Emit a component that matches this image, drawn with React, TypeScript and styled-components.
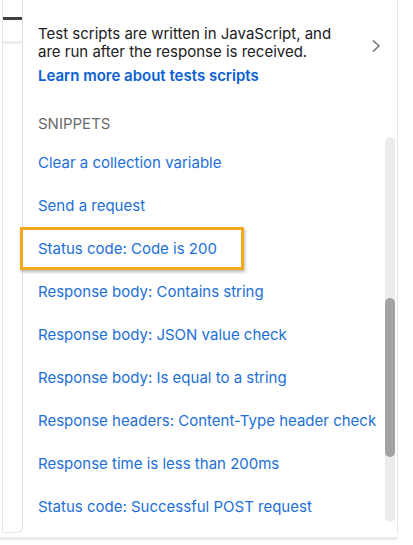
import React from "react";
import styled, { createGlobalStyle } from "styled-components";

const GlobalStyle = createGlobalStyle`
    html, body {
        margin: 0;
        padding: 0;
        background: #ffffff;
    }
    body {
        font-family: Inter, "Noto Sans", sans-serif;
        -webkit-font-smoothing: antialiased;
    }
`;

const snippets = [
    "Clear a collection variable",
    "Send a request",
    "Status code: Code is 200",
    "Response body: Contains string",
    "Response body: JSON value check",
    "Response body: Is equal to a string",
    "Response headers: Content-Type header check",
    "Response time is less than 200ms",
    "Status code: Successful POST request",
];

namespace Styled {
    export const Page = styled.div`
        width: 413px;
        height: 545px;
        display: flex;
        flex-direction: column;
        overflow: hidden;
    `;

    export const Row = styled.div`
        display: flex;
        height: 534px;
        width: 398px;
    `;

    export const LeftColumn = styled.div`
        width: 21px;
        margin-left: 2px;
        height: 533px;
        border-left: 1px solid #e4e4e4;
        border-right: 1px solid #e0e0e0;
        border-bottom: 1px solid #e8e8e8;
        border-bottom-right-radius: 6px;
        box-sizing: border-box;
        padding-top: 17px;
    `;

    export const Tab = styled.div`
        height: 27px;
        box-sizing: border-box;
        border-top: 3px solid #404040;
        border-bottom: 3px solid #ededed;
    `;

    export const Main = styled.div`
        flex: 1;
        display: flex;
        flex-direction: column;
        border-right: 1px solid #e6e6e6;
        min-width: 0;
    `;

    export const Intro = styled.div`
        display: flex;
        align-items: center;
        padding: 25px 0 0 15px;
    `;

    export const IntroText = styled.div`
        flex: 1;
        font-size: 15px;
        line-height: 18px;
        color: #212121;
    `;

    export const LearnMore = styled.a`
        display: block;
        margin-top: 6px;
        font-weight: 600;
        color: #0b5fd4;
        text-decoration: none;
    `;

    export const Chevron = styled.div`
        width: 10px;
        margin: -18px 16px 0 0;
        display: flex;
        color: #6b6b6b;
    `;

    export const Heading = styled.div`
        margin: 29px 0 0 15px;
        font-size: 15px;
        line-height: 20px;
        color: #6b6b6b;
    `;

    export const Body = styled.div`
        display: flex;
        margin-top: 3px;
        height: 385px;
    `;

    export const List = styled.div`
        flex: 1;
        padding-top: 4px;
    `;

    export const Item = styled.div<{ highlighted?: boolean }>`
        position: relative;
        height: 43px;
        line-height: 43px;
        padding-left: 15px;
        font-size: 15px;
        color: #1c6fd8;
        white-space: nowrap;

        ${({ highlighted }) => highlighted && `
            &::after {
                content: "";
                position: absolute;
                left: -3px;
                top: 0;
                width: 224px;
                height: 43px;
                box-sizing: border-box;
                border: 3px solid #f6a81c;
                box-shadow: 1px 2px 3px rgba(0, 0, 0, 0.28);
                z-index: 2;
            }
        `}
    `;

    export const Track = styled.div`
        position: relative;
        width: 10px;
        margin-right: 2px;
        border-radius: 5px;
        background: #ececec;
    `;

    export const Thumb = styled.div`
        position: absolute;
        left: 0;
        top: 161px;
        width: 10px;
        height: 159px;
        border-radius: 5px;
        background: #a3a3a3;
    `;

    export const Footer = styled.div`
        margin-top: 3px;
        width: 398px;
        height: 3px;
        background: #ececec;
    `;
}

const App: React.FC = () => {
    return (
        <>
            <GlobalStyle />
            <Styled.Page>
                <Styled.Row>
                    <Styled.LeftColumn>
                        <Styled.Tab />
                    </Styled.LeftColumn>
                    <Styled.Main>
                        <Styled.Intro>
                            <Styled.IntroText>
                                Test scripts are written in JavaScript, and
                                <br />
                                are run after the response is received.
                                <Styled.LearnMore href="#">Learn more about tests scripts</Styled.LearnMore>
                            </Styled.IntroText>
                            <Styled.Chevron>
                                <svg width="10" height="14" viewBox="0 0 10 14" fill="none">
                                    <polyline points="2,1.5 8,7 2,12.5" stroke="currentColor" strokeWidth="1.4" />
                                </svg>
                            </Styled.Chevron>
                        </Styled.Intro>
                        <Styled.Heading>SNIPPETS</Styled.Heading>
                        <Styled.Body>
                            <Styled.List>
                                {snippets.map((s, i) => (
                                    <Styled.Item key={s} highlighted={i === 2}>{s}</Styled.Item>
                                ))}
                            </Styled.List>
                            <Styled.Track>
                                <Styled.Thumb />
                            </Styled.Track>
                        </Styled.Body>
                    </Styled.Main>
                </Styled.Row>
                <Styled.Footer />
            </Styled.Page>
        </>
    );
};

export default App;
